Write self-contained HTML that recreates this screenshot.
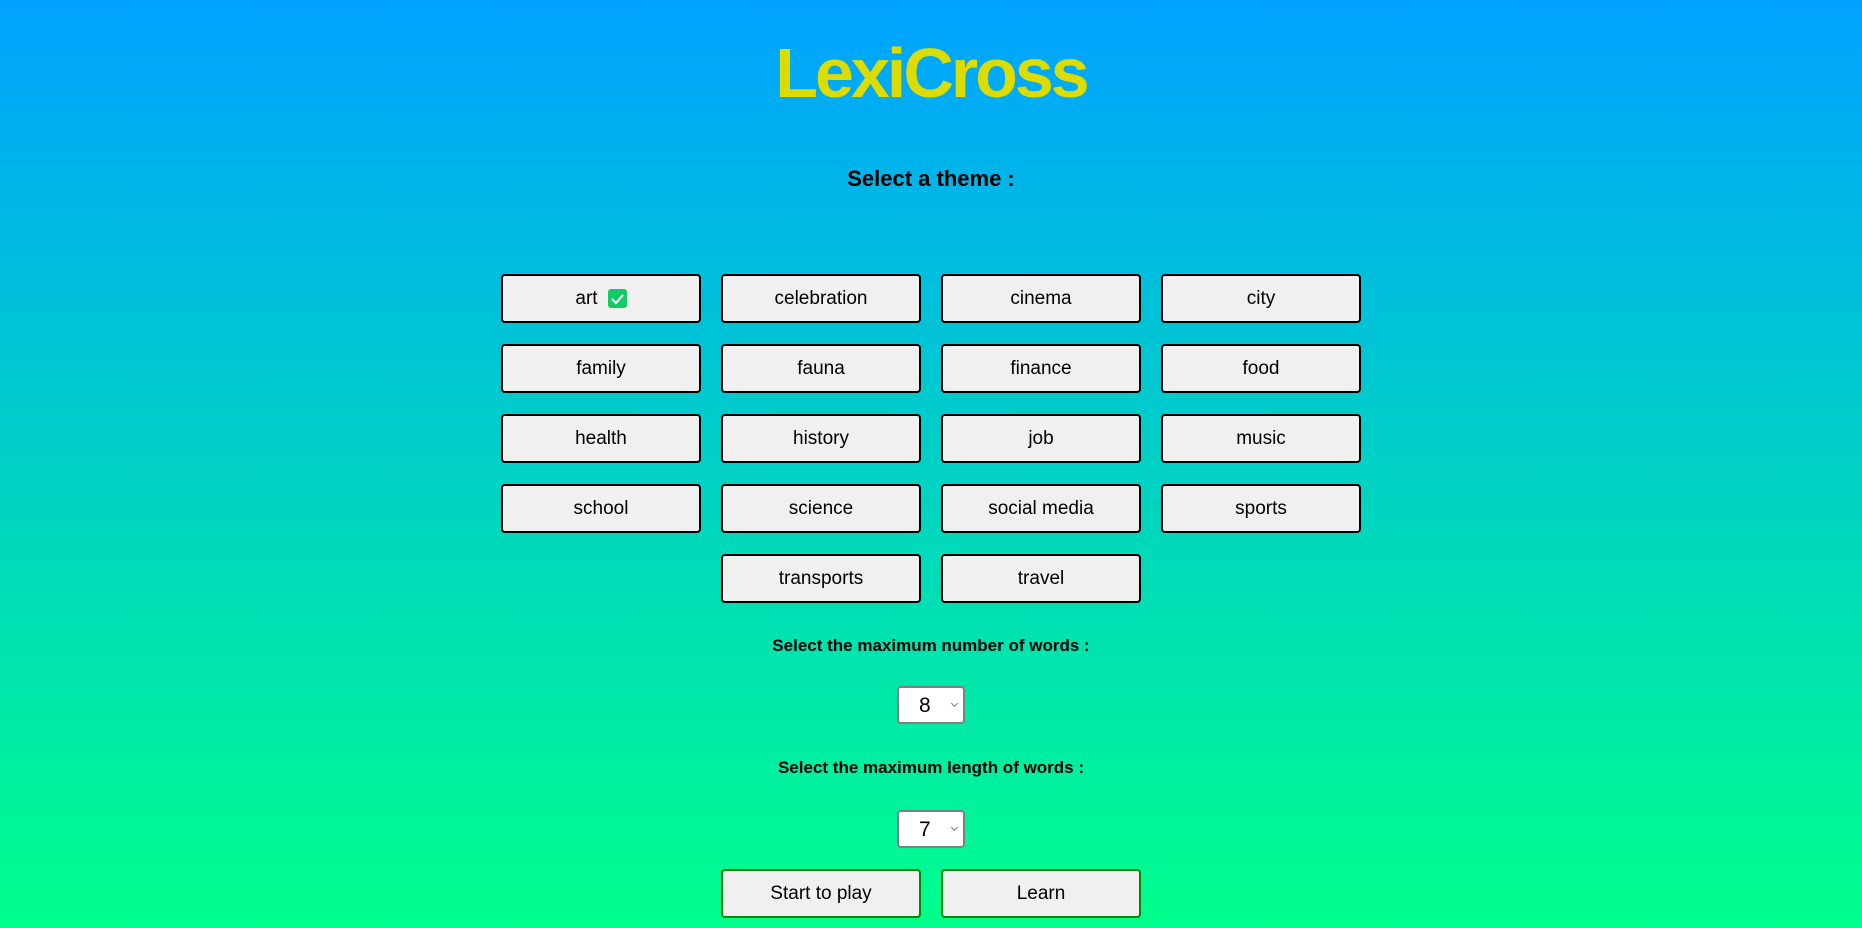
<!DOCTYPE html>
<html><head><style>
html,body{margin:0;padding:0;width:1862px;height:928px;overflow:hidden}
body{background:linear-gradient(#00a2ff,#00ff8c);font-family:"Liberation Sans",sans-serif;position:relative}
.t{position:absolute;left:0;width:1862px;text-align:center;font-weight:bold}
.b{position:absolute;width:200px;height:49px;box-sizing:border-box;border:2px solid #000;border-radius:4px;background:#f0f0f0;font-size:19px;display:flex;align-items:center;justify-content:center;color:#000}
.s{position:absolute;left:897px;width:68px;height:38px;box-sizing:border-box;border:2px solid #808080;border-radius:4px;background:#fff;font-size:21px}
.s span{position:absolute;left:20px;top:6px}
.s i{position:absolute;right:6px;top:13px;width:4px;height:4px;border-right:1px solid #777;border-bottom:1px solid #777;transform:rotate(45deg)}
.g{border-color:#080}
</style></head><body>
<div class="t" style="top:33px;font-size:70px;color:#dcdc00;letter-spacing:-3px">LexiCross</div>
<div class="t" style="top:166px;font-size:22px">Select a theme :</div>

<div class="b" style="left:501px;top:274px">art <span style="display:inline-block;width:19px;height:19px;background:#11cc66;border-radius:3px;margin-left:10px;position:relative"><svg width="19" height="19" style="position:absolute;left:0;top:0"><path d="M4 10 L8 14 L15 6" stroke="#fff" stroke-width="2" fill="none"/></svg></span></div>
<div class="b" style="left:721px;top:274px">celebration</div>
<div class="b" style="left:941px;top:274px">cinema</div>
<div class="b" style="left:1161px;top:274px">city</div>
<div class="b" style="left:501px;top:344px">family</div>
<div class="b" style="left:721px;top:344px">fauna</div>
<div class="b" style="left:941px;top:344px">finance</div>
<div class="b" style="left:1161px;top:344px">food</div>
<div class="b" style="left:501px;top:414px">health</div>
<div class="b" style="left:721px;top:414px">history</div>
<div class="b" style="left:941px;top:414px">job</div>
<div class="b" style="left:1161px;top:414px">music</div>
<div class="b" style="left:501px;top:484px">school</div>
<div class="b" style="left:721px;top:484px">science</div>
<div class="b" style="left:941px;top:484px">social media</div>
<div class="b" style="left:1161px;top:484px">sports</div>
<div class="b" style="left:721px;top:554px">transports</div>
<div class="b" style="left:941px;top:554px">travel</div>

<div class="t" style="top:636px;font-size:17px">Select the maximum number of words :</div>
<div class="s" style="top:686px"><span>8</span><i></i></div>
<div class="t" style="top:758px;font-size:17px">Select the maximum length of words :</div>
<div class="s" style="top:810px"><span>7</span><i></i></div>

<div class="b g" style="left:721px;top:869px">Start to play</div>
<div class="b g" style="left:941px;top:869px">Learn</div>
</body></html>
